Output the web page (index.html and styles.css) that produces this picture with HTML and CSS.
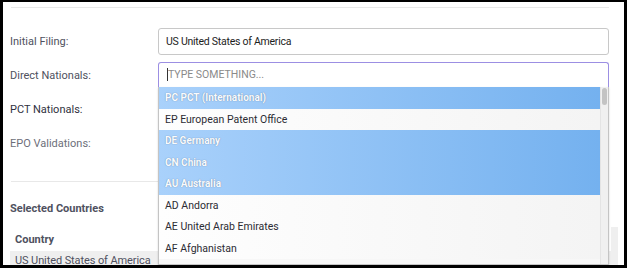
FILE: index.html
```html
<!DOCTYPE html>
<html>
<head>
<meta charset="utf-8">
<link rel="stylesheet" href="styles.css">
</head>
<body>
<div class="frame">
  <div class="panel">
    <div class="rule"></div>
    <div class="form">
      <div class="row">
        <span class="label">Initial Filing:</span>
        <div class="input filled">US United States of America</div>
      </div>
      <div class="row">
        <span class="label">Direct Nationals:</span>
        <div class="input focused"><span class="caret"></span><span class="placeholder">TYPE SOMETHING...</span></div>
      </div>
      <div class="row">
        <span class="label dark">PCT Nationals:</span>
        <div></div>
      </div>
      <div class="row">
        <span class="label light">EPO Validations:</span>
        <div></div>
      </div>
    </div>
    <div class="rule sep"></div>
    <div class="heading">Selected Countries</div>
    <div class="table">
      <div class="thead">Country</div>
      <div class="trow">
        <span class="c1">US United States of America</span>
      </div>
    </div>
    <div class="tscroll"></div>

    <div class="dropdown">
      <ul class="options">
        <li class="sel">PC PCT (International)</li>
        <li>EP European Patent Office</li>
        <li class="sel">DE Germany</li>
        <li class="sel">CN China</li>
        <li class="sel">AU Australia</li>
        <li>AD Andorra</li>
        <li>AE United Arab Emirates</li>
        <li>AF Afghanistan</li>
      </ul>
      <div class="scrollbar"><div class="thumb"></div></div>
    </div>
  </div>
</div>
</body>
</html>
```

FILE: styles.css
```css
* { box-sizing: border-box; }
html, body { margin: 0; padding: 0; background: #000; }
body { font-family: Roboto, "Liberation Sans", sans-serif; font-size: 11px; }

.frame {
  width: 627px;
  height: 268px;
  padding: 2px 3px 3px 3px;
  background: #000;
}
.panel {
  position: relative;
  background: #fff;
  height: 263px;
  overflow: hidden;
  padding: 5px 15px 0 7px;
}
.rule {
  height: 1px;
  background: #e8e8e8;
  margin-left: 1px;
}
.form { margin-top: 16px; }
.row {
  display: grid;
  grid-template-columns: 148px 1fr;
  height: 34px;
  align-items: center;
}
.label { color: #4f5160; }
.label.dark { color: #2f3140; }
.label.light { color: #6d6f7a; }

.input {
  border: 1px solid #c8c8c8;
  border-radius: 3px;
  display: flex;
  align-items: center;
  padding-left: 7px;
}
.input.filled {
  height: 27px;
  font-size: 10.5px;
  letter-spacing: -0.25px;
  color: #1d1d1d;
}
.input.focused {
  height: 26px;
  margin-top: -1px;
  border-color: #9c8fe3;
  border-bottom-color: #b8b0e8;
  border-radius: 3px 3px 0 0;
  padding-left: 8px;
  font-size: 10.5px;
}
.caret {
  width: 1px;
  height: 13px;
  background: #333;
}
.placeholder { color: #8a8a8a; }

.sep { margin-top: 21px; }
.heading {
  margin-top: 19px;
  line-height: 16px;
  font-weight: 700;
  color: #4f5160;
}
.table { margin-top: 15px; }
.thead {
  line-height: 16px;
  font-weight: 700;
  color: #4f5160;
  padding-left: 5px;
}
.trow {
  margin-top: 3px;
  background: #efefef;
  height: 22px;
  color: #4f5160;
  padding: 3px 0 0 5px;
  line-height: 14px;
  margin-right: -3px;
  letter-spacing: -0.1px;
}
.tscroll {
  position: absolute;
  right: 6px;
  bottom: 0;
  width: 7px;
  height: 38px;
  background: #efefef;
}

.dropdown {
  position: absolute;
  left: 155px;
  top: 85px;
  width: 451px;
  height: 178px;
  border: 1px solid #c4c4c4;
  border-top: none;
  background: #f7f7f7;
  box-shadow: 0 1px 2px rgba(0,0,0,0.15);
  display: flex;
  overflow: hidden;
}
.options {
  list-style: none;
  margin: 0;
  padding: 0;
  flex: 1;
}
.options li {
  height: 21.5px;
  line-height: 21.5px;
  padding-left: 6px;
  font-size: 10.5px;
  color: #2c2c34;
  background: linear-gradient(to right, #fefefe, #f4f4f4);
  white-space: nowrap;
}
.options li.sel {
  background: linear-gradient(to right, #a9d1fb, #74b1ef);
  color: #f8fbff;
  font-size: 10px;
  font-weight: 700;
  text-shadow: 0 0 1px rgba(60, 80, 110, 0.7);
}
.scrollbar {
  width: 8px;
  background: #f0f0f0;
  border-left: 1px solid #e4e4e4;
  padding: 1px 1px 0 1px;
}
.thumb {
  height: 17px;
  background: #c3c3c3;
  border-radius: 3px;
}
```
